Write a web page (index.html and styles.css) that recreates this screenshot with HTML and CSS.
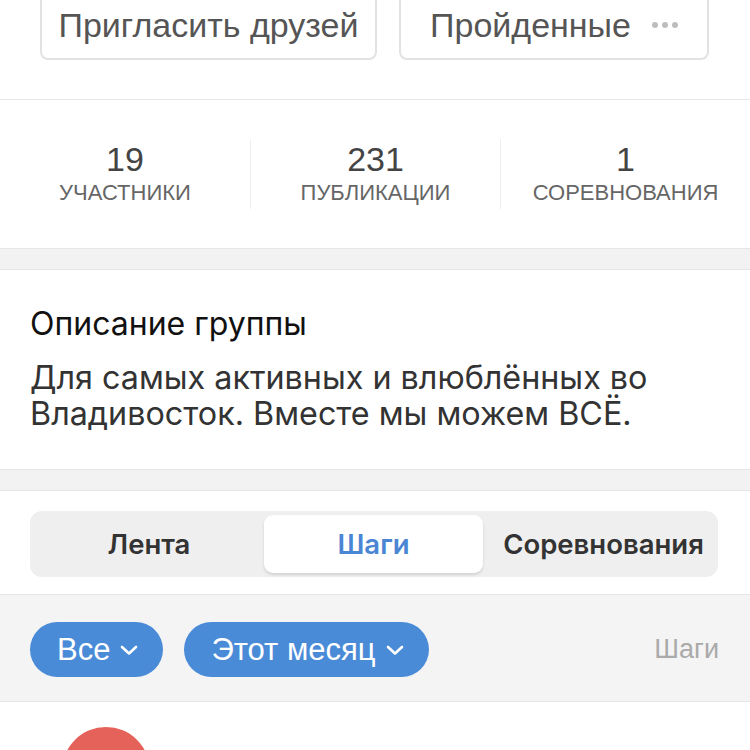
FILE: index.html
```html
<!DOCTYPE html>
<html>
<head>
    <title>Группа</title>
    <link rel="stylesheet" href="styles.css">
</head>
<body>
    <div class="top-actions">
        <button class="action-btn invite">Пригласить друзей</button>
        <button class="action-btn passed">
            Пройденные
            <span class="dots"><i></i><i></i><i></i></span>
        </button>
    </div>

    <div class="stats">
        <div class="stat">
            <div class="stat-num">19</div>
            <div class="stat-label">Участники</div>
        </div>
        <div class="stat">
            <div class="stat-num">231</div>
            <div class="stat-label">Публикации</div>
        </div>
        <div class="stat">
            <div class="stat-num">1</div>
            <div class="stat-label">Соревнования</div>
        </div>
    </div>

    <div class="spacer"></div>

    <div class="description">
        <h2>Описание группы</h2>
        <p>Для самых активных и влюблённых во Владивосток. Вместе мы можем ВСЁ.</p>
    </div>

    <div class="spacer"></div>

    <div class="tabs-wrap">
        <div class="tabs">
            <div class="tab">Лента</div>
            <div class="tab active">Шаги</div>
            <div class="tab">Соревнования</div>
        </div>
    </div>

    <div class="filters">
        <button class="pill">Все
            <svg width="20" height="12" viewBox="0 0 20 12"><path d="M3 3 L10 9.5 L17 3" fill="none" stroke="#fff" stroke-width="2.6" stroke-linecap="round" stroke-linejoin="round"/></svg>
        </button>
        <button class="pill">Этот месяц
            <svg width="20" height="12" viewBox="0 0 20 12"><path d="M3 3 L10 9.5 L17 3" fill="none" stroke="#fff" stroke-width="2.6" stroke-linecap="round" stroke-linejoin="round"/></svg>
        </button>
        <span class="filter-label">Шаги</span>
    </div>

    <div class="member-row">
        <div class="avatar"></div>
    </div>
</body>
</html>
```

FILE: styles.css
```css
body {
    margin: 0;
    background-color: #fff;
    font-family: "Liberation Sans", Arial, sans-serif;
    overflow: hidden;
}

.top-actions {
    display: flex;
    gap: 22px;
    padding: 0 40px 39px;
    margin-top: -10px;
}

.action-btn {
    display: flex;
    align-items: center;
    justify-content: center;
    height: 70px;
    padding: 0;
    background-color: #fff;
    border: 2px solid #e2e2e2;
    border-radius: 8px;
    font-family: inherit;
    font-size: 34px;
    color: #555;
}

.invite {
    width: 337px;
}

.passed {
    width: 310px;
    gap: 21px;
}

.dots {
    display: flex;
    gap: 4px;
}

.dots i {
    width: 6px;
    height: 6px;
    border-radius: 50%;
    background-color: #bdbdbd;
}

.stats {
    display: grid;
    grid-template-columns: repeat(3, 1fr);
    height: 150px;
    padding: 39px 0;
    box-sizing: border-box;
    border-top: 1px solid #e6e6e6;
    border-bottom: 1px solid #e6e6e6;
}

.stat {
    text-align: center;
    border-left: 1px solid #eee;
}

.stat:first-child {
    border-left: none;
}

.stat-num {
    font-size: 34px;
    line-height: 40px;
    color: #444;
}

.stat-label {
    font-size: 22px;
    line-height: 28px;
    color: #666;
    text-transform: uppercase;
}

.spacer {
    height: 20px;
    background-color: #f2f2f2;
}

.description {
    padding: 36px 30px 37px;
    border-top: 1px solid #e6e6e6;
    border-bottom: 1px solid #e6e6e6;
    font-family: Inter, "Liberation Sans", sans-serif;
}

.description h2 {
    margin: 0 0 18px;
    font-size: 32px;
    font-weight: normal;
    line-height: 36px;
    color: #111;
}

.description p {
    margin: 0;
    font-size: 32.3px;
    line-height: 36px;
    color: #333;
}

.tabs-wrap {
    padding: 20px 32px 17px 30px;
    border-top: 1px solid #e6e6e6;
    border-bottom: 1px solid #e6e6e6;
}

.tabs {
    display: grid;
    grid-template-columns: 230px 219px 1fr;
    padding: 4px;
    background-color: #efeff0;
    border-radius: 12px;
    font-family: Inter, "Liberation Sans", sans-serif;
}

.tab {
    height: 58px;
    line-height: 58px;
    text-align: center;
    font-size: 27.5px;
    font-weight: 600;
    color: #333;
}

.tab:last-child {
    padding-left: 10px;
}

.tab.active {
    background-color: #fff;
    border-radius: 9px;
    color: #4a86d4;
    box-shadow: 0 2px 3px rgba(0, 0, 0, 0.12);
}

.filters {
    display: flex;
    align-items: center;
    gap: 21px;
    padding: 27px 31px 24px 30px;
    background-color: #f4f4f4;
    border-bottom: 1px solid #e6e6e6;
}

.pill {
    display: flex;
    align-items: center;
    gap: 9px;
    height: 55px;
    padding: 0 24px 0 27px;
    background-color: #4a8bd8;
    border: none;
    border-radius: 28px;
    font-family: inherit;
    font-size: 31px;
    color: #fff;
}

.filter-label {
    margin-left: auto;
    font-size: 27px;
    color: #aaa;
}

.member-row {
    padding: 25px 62px;
}

.avatar {
    width: 88px;
    height: 88px;
    border-radius: 50%;
    background-color: #e5625a;
}
```
